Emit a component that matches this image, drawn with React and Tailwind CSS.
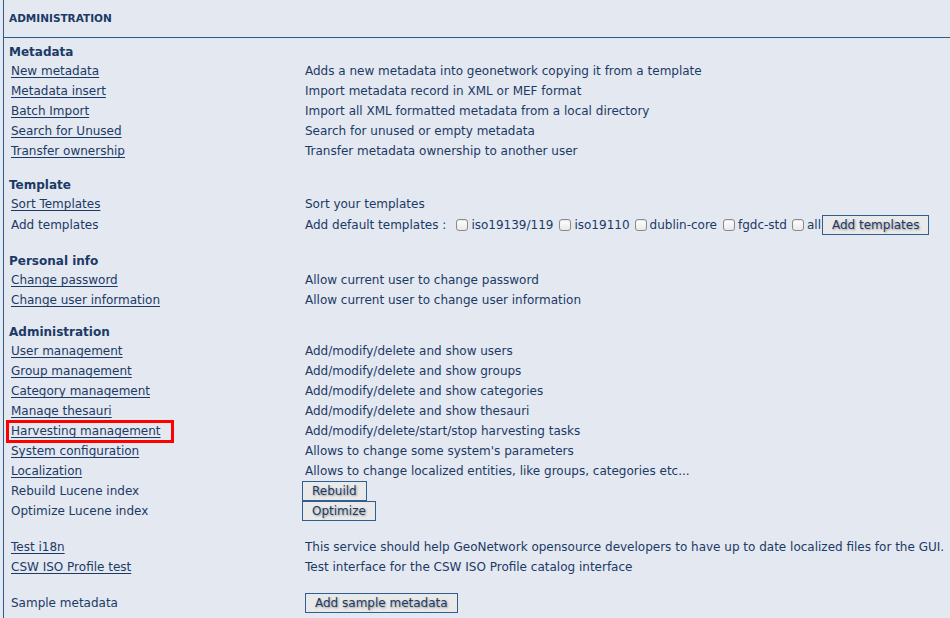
import React from "react";

const C = "text-[#1b3a66]";

function Heading({ children, mt }) {
  return (
    <div className={`h-[18px] flex items-center font-bold text-[12px] ${mt}`}>{children}</div>
  );
}

function Row({ left, right, link = true, h = "h-[20px]", mt = "" }) {
  return (
    <div className={`grid grid-cols-[296px_1fr] items-center ${h} ${mt}`}>
      <div className="pl-[2px]">
        {link ? <a className="underline underline-offset-[2px] cursor-pointer">{left}</a> : <span>{left}</span>}
      </div>
      <div className="flex items-center">{right}</div>
    </div>
  );
}

function Btn({ children, cls = "" }) {
  return (
    <button className={`border border-[#2f5f92] bg-[#e9e9ea] text-[#1b3a66] px-[9px] h-[20px] leading-[18px] [text-shadow:1px_1px_2px_rgba(0,0,0,0.35)] ${cls}`}>
      {children}
    </button>
  );
}

function Check() {
  return (
    <span className="inline-block w-[12px] h-[12px] rounded-[3px] border border-[#8a8a8a] bg-gradient-to-b from-white to-[#e9e9e9] shadow-[inset_0_1px_1px_rgba(0,0,0,0.1)]" />
  );
}

export default function App() {
  return (
    <div className={`w-[950px] h-[618px] overflow-hidden bg-[#e4e8f0] ${C} text-[12px] font-['DejaVu_Sans',Verdana,sans-serif]`}>
      <div className="ml-[3px] h-full border-l border-[#2c5a8c]">
        <div className="h-[38px] border-b border-[#2c5a8c] flex items-center pl-[5px] pt-[1px] font-bold text-[10.5px]">
          ADMINISTRATION
        </div>
        <div className="pl-[5px] pt-[5px]">
          <Heading>Metadata</Heading>
          <Row left="New metadata" right="Adds a new metadata into geonetwork copying it from a template" />
          <Row left="Metadata insert" right="Import metadata record in XML or MEF format" />
          <Row left="Batch Import" right="Import all XML formatted metadata from a local directory" />
          <Row left="Search for Unused" right="Search for unused or empty metadata" />
          <Row left="Transfer ownership" right="Transfer metadata ownership to another user" />

          <Heading mt="mt-[15px]">Template</Heading>
          <Row left="Sort Templates" right="Sort your templates" />
          <Row
            left="Add templates"
            link={false}
            h="h-[22px]"
            right={
              <div className="flex items-center">
                <span>Add default templates :</span>
                <span className="ml-[10px] flex items-center gap-[3px]"><Check /><span>iso19139/119</span></span>
                <span className="ml-[6px] flex items-center gap-[3px]"><Check /><span>iso19110</span></span>
                <span className="ml-[5px] flex items-center gap-[3px]"><Check /><span>dublin-core</span></span>
                <span className="ml-[6px] flex items-center gap-[3px]"><Check /><span>fgdc-std</span></span>
                <span className="ml-[5px] flex items-center gap-[3px]"><Check /><span>all</span></span>
                <Btn cls="ml-[1px] px-[9px]">Add templates</Btn>
              </div>
            }
          />

          <Heading mt="mt-[16px]">Personal info</Heading>
          <Row left="Change password" right="Allow current user to change password" />
          <Row left="Change user information" right="Allow current user to change user information" />

          <Heading mt="mt-[13px]">Administration</Heading>
          <Row left="User management" right="Add/modify/delete and show users" />
          <Row left="Group management" right="Add/modify/delete and show groups" />
          <Row left="Category management" right="Add/modify/delete and show categories" />
          <Row left="Manage thesauri" right="Add/modify/delete and show thesauri" />
          <div className="grid grid-cols-[296px_1fr] items-center h-[20px]">
            <div className="relative pl-[2px]">
              <a className="underline underline-offset-[2px] cursor-pointer">Harvesting management</a>
              <span className="absolute left-[-3px] top-[-2px] w-[168px] h-[23px] border-[3px] border-[#ff0000] pointer-events-none" />
            </div>
            <div>Add/modify/delete/start/stop harvesting tasks</div>
          </div>
          <Row left="System configuration" right="Allows to change some system's parameters" />
          <Row left="Localization" right="Allows to change localized entities, like groups, categories etc..." />
          <Row left="Rebuild Lucene index" link={false} right={<Btn cls="-ml-[3px]">Rebuild</Btn>} />
          <Row left="Optimize Lucene index" link={false} right={<Btn cls="-ml-[3px]">Optimize</Btn>} />

          <Row mt="mt-[16px]" left="Test i18n" right="This service should help GeoNetwork opensource developers to have up to date localized files for the GUI." />
          <Row left="CSW ISO Profile test" right="Test interface for the CSW ISO Profile catalog interface" />

          <Row mt="mt-[16px]" left="Sample metadata" link={false} right={<Btn>Add sample metadata</Btn>} />
        </div>
      </div>
    </div>
  );
}
